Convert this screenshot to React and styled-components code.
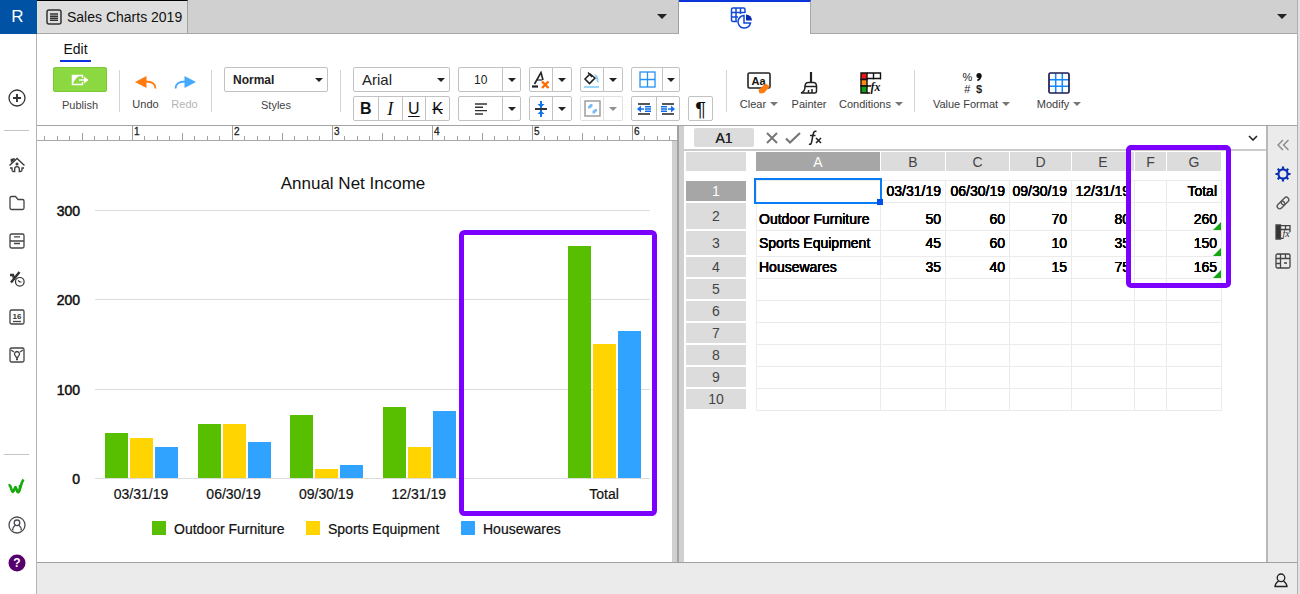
import React from "react";
import styled, { createGlobalStyle } from "styled-components";

const GlobalStyle = createGlobalStyle`
  *, *::before, *::after { box-sizing: border-box; }
  body { margin: 0; background: #fff; color: #111; font: 14px/16px "Liberation Sans", Arial, sans-serif; }
  button, select, input { font: inherit; color: inherit; margin: 0; padding: 0; border: 0; background: none; }
  svg { display: block; flex: none; }
`;

/* ---------- frame ---------- */

const Shell = styled.div`
  display: flex;
  min-height: 100vh;
  border-right: 2px solid #e2e2e2;
`;

const Rail = styled.nav`
  display: flex;
  flex-direction: column;
  flex: none;
  width: 37px;
`;

const Brand = styled.a`
  height: 34px;
  background: #0052a5;
  color: #fff;
  font-size: 17px;
  line-height: 34px;
  text-align: center;
  text-decoration: none;
  padding-right: 2px;
`;

const RailBody = styled.div`
  display: flex;
  flex-direction: column;
  flex: 1;
  padding: 45px 0 12px;
  border-right: 1px solid #b4b4b4;
`;

const RailButton = styled.button`
  display: flex;
  align-items: center;
  justify-content: center;
  height: 38px;
  padding-right: 3px;
`;

const RailRule = styled.hr`
  width: 25px;
  height: 1px;
  margin: ${(p) => (p.$bottom ? "auto 0 13px 4px" : "13px 0 15px 4px")};
  border: 0;
  background: #c4c4c4;
`;

const Main = styled.main`
  display: flex;
  flex-direction: column;
  flex: 1;
  min-width: 0;
  border-right: 1px solid #b0b0b0;
`;

const Panes = styled.div`
  display: grid;
  grid-template-columns: minmax(0, 642fr) minmax(0, 618fr);
  flex: ${(p) => (p.$grow ? 1 : "none")};
`;

/* ---------- tab strip ---------- */

const TabStrip = styled.div`
  display: flex;
  justify-content: space-between;
  height: 34px;
  background: #d0d0d0;
  border-right: ${(p) => (p.$divided ? "1px solid #a0a0a0" : "0")};
`;

const StripFill = styled.div`
  display: flex;
  flex: 1;
  align-items: center;
  justify-content: flex-end;
  padding-right: ${(p) => p.$pad}px;
  border-bottom: 1px solid #a8a8a8;
`;

const DocTab = styled.button`
  display: flex;
  align-items: center;
  gap: 5px;
  width: 151px;
  padding-left: 9px;
  background: #dedede;
  border-top: 1px solid #000;
  border-right: 1px solid #a0a0a0;
  border-bottom: 1px solid #a8a8a8;
  white-space: nowrap;
`;

const ActiveTab = styled.button`
  display: flex;
  align-items: center;
  justify-content: center;
  width: 132px;
  padding-right: 8px;
  background: #fff;
  border-top: 2px solid #0a35d8;
  border-right: 1px solid #a8a8a8;
`;

const MenuButton = styled.button`
  display: flex;
  align-items: center;
`;

/* ---------- toolbar ---------- */

const Toolbar = styled.header`
  padding: 0 16px 4px;
  border-bottom: 1px solid #a4a4a4;
`;

const EditTab = styled.button`
  display: block;
  width: 31px;
  height: 28px;
  margin: 0 0 5px 7px;
  padding-top: 4px;
  border-bottom: 2px solid #0a32e0;
`;

const Tools = styled.div`
  display: flex;
  align-items: flex-start;
  height: 54px;
`;

const Rule = styled.span`
  flex: none;
  width: 1px;
  height: 42px;
  margin: 3px ${(p) => p.$after}px 0 ${(p) => p.$before}px;
  background: #d4d4d4;
`;

const Captioned = styled.label`
  display: flex;
  flex-direction: column;
  align-items: center;
  gap: 5px;
  flex: none;
  color: #444;
  font-size: 11px;
`;

const PublishButton = styled.button`
  display: flex;
  align-items: center;
  justify-content: center;
  width: 54px;
  height: 25px;
  background: #8bd841;
  border: 1px solid #78cb35;
  border-radius: 2px;
`;

const ToolButton = styled.button`
  display: flex;
  flex-direction: column;
  align-items: center;
  gap: 2px;
  flex: none;
  width: ${(p) => p.$w}px;
  padding-top: 5px;
  color: ${(p) => (p.$muted ? "#b4b4b4" : "#3c3c3c")};
  font-size: 11px;
  line-height: 16px;
  white-space: nowrap;
`;

const ToolLabel = styled.span`
  display: flex;
  align-items: center;
  gap: 4px;
`;

const ToolSet = styled.div`
  display: flex;
  gap: ${(p) => p.$gap}px;
`;

const FormatGrid = styled.div`
  display: grid;
  grid-template-columns: 97px 63px 43px 43px 49px 25px;
  grid-auto-rows: 25px;
  gap: 4px 8px;
  flex: none;
`;

const boxed = `
  border: 1px solid #c2c2c2;
  border-radius: 2px;
  background: #fff;
`;

const Picker = styled.span`
  ${boxed}
  display: grid;
  width: ${(p) => p.$w}px;
  height: 25px;
  color: #222;

  > * { grid-area: 1 / 1; }

  > select {
    width: 100%;
    padding-left: ${(p) => p.$pad}px;
    appearance: none;
    font-size: ${(p) => p.$size}px;
    font-weight: ${(p) => (p.$bold ? 700 : 400)};
  }
`;

const PickerCaret = styled.span`
  display: flex;
  align-items: center;
  justify-content: center;
  justify-self: end;
  width: ${(p) => (p.$divided ? 18 : 17)}px;
  border-left: ${(p) => (p.$divided ? "1px solid #c2c2c2" : "0")};
  pointer-events: none;
`;

const Segmented = styled.div`
  ${boxed}
  display: grid;
  grid-template-columns: ${(p) => p.$cols};
  opacity: ${(p) => (p.$muted ? 0.5 : 1)};
`;

const Segment = styled.button`
  display: flex;
  align-items: center;
  justify-content: center;
  min-width: 0;
  font-size: ${(p) => p.$size || 16}px;
  line-height: 20px;
  font-weight: ${(p) => (p.$bold ? 700 : 400)};
  font-style: ${(p) => (p.$italic ? "italic" : "normal")};
  font-family: ${(p) => (p.$serif ? '"Liberation Serif", serif' : "inherit")};
  text-decoration: ${(p) => p.$deco || "none"};
  text-underline-offset: 2px;

  & + & { border-left: 1px solid #c2c2c2; }
`;

/* ---------- document pane ---------- */

const DocPane = styled.section`
  display: flex;
  flex-direction: column;
  border-right: 2px solid #a2a2a2;
`;

const RulerStrip = styled.div`
  height: 15px;
  border-bottom: 1px solid #a8a8a8;
  overflow: hidden;
`;

const Page = styled.div`
  flex: 1;
  border-right: 5px solid #d0d0d0;

  > svg { width: 100%; height: auto; }
`;

/* ---------- sheet pane ---------- */

const SheetPane = styled.section`
  display: grid;
  grid-template-columns: minmax(0, 1fr) 31px;
  position: relative;
  border-left: 5px solid #d0d0d0;
`;

const SheetColumn = styled.div`
  min-width: 0;
`;

const FormulaBar = styled.div`
  display: flex;
  align-items: center;
  height: 25px;
  padding: 0 8px 0 10px;
  border-bottom: 2px solid #cbcbcb;
`;

const CellName = styled.input`
  width: 60px;
  height: 19px;
  margin-right: 11px;
  background: #dcdcdc;
  border-radius: 2px;
  color: #222;
  text-align: center;
  text-shadow: 0 0 0 currentColor;
`;

const FormulaButton = styled.button`
  display: flex;
  margin-right: 6px;
`;

const FormulaInput = styled.input`
  flex: 1;
  min-width: 0;
`;

const Grid = styled.table`
  width: 536px;
  margin: 1px 0 0 2px;
  border-collapse: separate;
  border-spacing: 0;
  table-layout: fixed;
`;

const ColHead = styled.th`
  width: ${(p) => p.$w}px;
  height: 28px;
  padding: 0;
  border: 0 solid #fff;
  border-width: 0 ${(p) => (p.$corner ? 10 : 1)}px 9px 0;
  background: ${(p) => (p.$on ? "#a6a6a6" : "#dcdcdc")};
  background-clip: padding-box;
  color: ${(p) => (p.$on ? "#fff" : "#444")};
  font-weight: 400;
`;

const RowHead = styled.th`
  height: ${(p) => p.$h}px;
  padding: 0;
  border: 0 solid #fff;
  border-width: ${(p) => (p.$on ? 1 : 0)}px 10px 2px 0;
  background: ${(p) => (p.$on ? "#a6a6a6" : "#dcdcdc")};
  background-clip: padding-box;
  color: ${(p) => (p.$on ? "#fff" : "#444")};
  font-weight: 400;
`;

const Cell = styled.td`
  position: relative;
  padding: ${(p) => (p.$low ? "4px" : 0)} ${(p) => (p.$label ? 0 : 4)}px ${(p) => (p.$low ? 0 : "2px")} 2px;
  border: 0 solid #ebebeb;
  border-width: ${(p) => (p.$top ? 1 : 0)}px 1px 1px ${(p) => (p.$label ? 1 : 0)}px;
  color: #000;
  text-align: ${(p) => (p.$label ? "left" : "right")};
  text-shadow: 0 0 0 currentColor, 0 0 0 currentColor, 0 0 0 currentColor;
  white-space: nowrap;
`;

const Selection = styled.span`
  position: absolute;
  z-index: 1;
  inset: -3px -2px -2px -3px;
  border: 2px solid #0a7cf5;

  &::after {
    content: "";
    position: absolute;
    right: -3px;
    bottom: -3px;
    width: 6px;
    height: 6px;
    background: #0050f0;
  }
`;

const FormulaFlag = styled.span`
  position: absolute;
  right: 0;
  bottom: 0;
  width: 8px;
  height: 8px;
  background: #0fa80f;
  clip-path: polygon(100% 0, 100% 100%, 0 100%);
`;

const SheetHighlight = styled.div`
  position: absolute;
  z-index: 2;
  left: 442px;
  top: 19px;
  width: 105px;
  height: 143px;
  border: 5px solid #7b00ff;
  border-radius: 5px;
  pointer-events: none;
`;

const SideTools = styled.aside`
  display: flex;
  flex-direction: column;
  align-items: center;
  padding-top: 4px;
  background: #ebebeb;
  border-left: 2px solid #b8b8b8;
`;

const SideButton = styled.button`
  display: flex;
  align-items: center;
  height: 29px;
`;

const StatusBar = styled.footer`
  display: flex;
  align-items: center;
  justify-content: flex-end;
  height: 32px;
  padding: 3px 9px 0 0;
  background: #ebebeb;
  border-top: 1px solid #a0a0a0;
`;

/* ---------- icons ---------- */

const Icon = ({ w = 18, h = w, color = "#444", sw = 1.3, children }) => (
  <svg width={w} height={h} viewBox={`0 0 ${w} ${h}`} fill="none" stroke={color} strokeWidth={sw} aria-hidden="true">
    {children}
  </svg>
);

const Caret = ({ color = "#222", w = 8 }) => (
  <svg width={w} height={w / 2} viewBox="0 0 8 4" aria-hidden="true">
    <path d="M0 0h8L4 4z" fill={color} />
  </svg>
);

const DocIcon = () => (
  <Icon w={16} h={16} color="#333" sw={1.5}>
    <rect x="1" y="1" width="14" height="14" rx="2" />
    <path d="M4 5h8M4 7.3h8M4 9.3h8M4 11.3h8" strokeWidth="1.4" />
  </Icon>
);

const SheetChartIcon = () => (
  <Icon w={22} h={22} color="#1048d8" sw={1.5}>
    <path d="M7 14.5H3A1.5 1.5 0 0 1 1.5 13V2.500A1.500 1.500 0 0 1 3 1h10.500A1.500 1.500 0 0 1 15 2.500V6M1.500 5.500H15M1.500 10H8M6 1v13.500M10.500 1v6" />
    <path d="M14 8.500a6.300 6.300 0 1 0 6.500 7.500H14z" />
    <path d="M16 7.500v6h6a6 6 0 0 0-6-6z" fill="#0a28b0" stroke="none" />
  </Icon>
);

const PlusIcon = () => (
  <Icon w={18} color="#333" sw={1.3}>
    <circle cx="9" cy="9" r="8" />
    <path d="M9 5v8M5 9h8" strokeWidth="1.900" />
  </Icon>
);

const HomeIcon = () => (
  <Icon w={16} color="#3a3a3a">
    <path d="M.5 8.500L8 1.500l7.500 7" />
    <path d="M3 10.500V13a1.500 1.500 0 0 0 1.500 1.500h1.200V12a2.300 2.300 0 0 1 4.600 0v2.500h1.200A1.500 1.500 0 0 0 13 13v-2.500M1 11h2.500M15 11h-2.500" />
    <circle cx="8" cy="7" r="1.500" fill="#3a3a3a" stroke="none" />
    <path d="M1.500 2l4-1 .5 1.500-4 3.500z" fill="#3a3a3a" stroke="none" />
  </Icon>
);

const FolderIcon = () => (
  <Icon w={16}>
    <path d="M1 3a1.500 1.500 0 0 1 1.500-1.500h4L9 4.500h4.500A1.500 1.500 0 0 1 15 6v7a1.500 1.500 0 0 1-1.500 1.500h-11A1.500 1.500 0 0 1 1 13z" />
  </Icon>
);

const DrawerIcon = () => (
  <Icon w={16}>
    <rect x="1" y="1" width="14" height="14" rx="1.500" />
    <path d="M1 8h14M5 3.800h6M5 10.500h6" />
  </Icon>
);

const RecentIcon = () => (
  <Icon w={16} color="#333">
    <path d="M1 4h3l1.500 5M10.500 1L2 11.500" strokeWidth="2.400" />
    <circle cx="10.800" cy="10.800" r="4.300" strokeWidth="1.200" />
    <path d="M9 9.500l1.800 1.500h1.700" strokeWidth="1.200" />
  </Icon>
);

const CalendarIcon = () => (
  <Icon w={16}>
    <rect x="1" y="1" width="14" height="14" rx="1.500" />
    <path d="M4 12.500h8" />
    <text x="8" y="10" fontSize="8" fontWeight="700" textAnchor="middle" fill="#333" stroke="none">16</text>
  </Icon>
);

const IdeaIcon = () => (
  <Icon w={16}>
    <rect x="1" y="1" width="14" height="14" rx="1.500" />
    <path d="M2 3l3 2M14 3l-3 2M7 12.500h2" />
    <path d="M8 4.500a2.600 2.600 0 0 1 1.300 4.800L8 11.500 6.700 9.300A2.600 2.600 0 0 1 8 4.500z" />
  </Icon>
);

const BrandMark = () => (
  <Icon w={18} color="#18a80c" sw={2.6}>
    <path d="M.5 7c1.500 0 2 1 2.500 3 .5 2 1 4 2 4s1.500-5 2.500-5 1 5 2.500 5c2 0 2-5 2-7" />
    <path d="M9.500 14.500C13 13 12 6 15.500 1.500" />
  </Icon>
);

const AccountIcon = () => (
  <Icon w={18} color="#4a4a52">
    <circle cx="9" cy="9" r="8" />
    <circle cx="9" cy="6.800" r="2.800" />
    <path d="M4.500 14c0-3 1.500-3.500 3-4.800M13.500 14c0-3-1.500-3.500-3-4.800M4.500 13.800h1M12.500 13.800h1" />
  </Icon>
);

const HelpIcon = () => (
  <Icon w={18}>
    <circle cx="9" cy="9" r="8.500" fill="#56006e" stroke="none" />
    <text x="9" y="13" fontSize="12" fontWeight="700" textAnchor="middle" fill="#fff" stroke="none">?</text>
  </Icon>
);

const PublishIcon = () => (
  <Icon w={18} h={12} color="#fff" sw={1.5}>
    <path d="M11.500 4V1.500H1.500v9h10V8" />
    <path d="M2 2h6L5 4.500 2 9z" fill="#fff" stroke="none" />
    <path d="M8 6h7" />
    <path d="M13 2.500L17.500 6 13 9.500z" fill="#fff" stroke="none" />
  </Icon>
);

const UndoIcon = ({ color = "#ff7a0f", flip }) => (
  <Icon w={22} h={22}>
    <g transform={flip ? "translate(22 0) scale(-1 1)" : undefined} stroke="none">
      <path d="M0 10L11.500 4v12z" fill={color} />
      <path d="M11 9.500c6 0 9.500 2.500 9.500 7" stroke={color} strokeWidth="1.800" fill="none" />
    </g>
  </Icon>
);

const AlignIcon = () => (
  <Icon w={14} h={12} color="#333" sw={1.4}>
    <path d="M1 1h12M1 4.300h8M1 7.600h12M1 11h8" />
  </Icon>
);

const ClearFontIcon = () => (
  <Icon w={18} h={18} color="#222" sw={1.6}>
    <path d="M2.500 13L9 1.500 11 9" />
    <path d="M5 9h5" strokeWidth="1.200" />
    <path d="M0 15.500h6" strokeWidth="2.200" />
    <path d="M10 10.500l6.500 6.500M16.500 10.500L10 17" stroke="#ff6a00" strokeWidth="2.400" />
  </Icon>
);

const FillIcon = () => (
  <Icon w={18} h={18} color="#222" sw={1.6}>
    <path d="M2 8l5-5 5 4-5.500 5.500z" />
    <path d="M5 1.500L9 6" strokeWidth="1.300" />
    <path d="M11 3c4 1 5 4 4.500 9-2.500-1-2-6-4.500-9z" fill="#8fd0f6" stroke="none" />
    <path d="M1 16h15" stroke="#8fd3fb" strokeWidth="1.800" />
  </Icon>
);

const BordersIcon = () => (
  <Icon w={17} h={17} color="#2492f0" sw={1.3}>
    <rect x="1" y="1" width="15" height="15" />
    <path d="M8.500 1v15M1 8.500h15" />
  </Icon>
);

const MiddleIcon = () => (
  <Icon w={14} h={16} color="#1174ea" sw={2}>
    <path d="M7 0v16" />
    <path d="M3.500 3h7L7 6.500zM3.500 13h7L7 9.500z" fill="#1174ea" stroke="none" />
    <path d="M1 8h12" stroke="#333" />
  </Icon>
);

const ExpandIcon = () => (
  <Icon w={17} h={17} color="#333" sw={1.4}>
    <rect x="1" y="1" width="15" height="15" />
    <path d="M4 8.500V6.500L6.500 4h2v2.500L6 8.500zM13 9v2l-2.500 2.500h-2V11L11 9z" fill="#0078f0" stroke="none" />
  </Icon>
);

const IndentIcon = ({ flip }) => (
  <Icon w={14} h={12} color="#1070f0" sw={1.5}>
    <path d="M1 1h12M1 11h12" stroke="#222" />
    <g transform={flip ? "translate(14 0) scale(-1 1)" : undefined}>
      <path d="M8 3.700h6M8 6h6M8 8.300h6" strokeWidth="1.400" />
      <path d="M3 6h4" />
      <path d="M0 6l4-3.500v7z" fill="#1070f0" stroke="none" />
    </g>
  </Icon>
);

const ClearIcon = () => (
  <Icon w={24} h={22} color="#222" sw={1.6}>
    <rect x="1" y="1" width="22" height="15" rx="1.500" />
    <text x="11.500" y="12.500" fontSize="11" fontWeight="700" textAnchor="middle" fill="#111" stroke="none">Aa</text>
    <path d="M11.500 18l7-6.500 4.500 3-6 6.500-4.500.5z" fill="#ff7d10" stroke="none" />
  </Icon>
);

const PainterIcon = () => (
  <Icon w={18} h={22} color="#222" sw={1.5}>
    <path d="M11 0v10.500" strokeWidth="2.200" />
    <path d="M5 14.500c0-2.500 1-4 3.500-4h5c2.500 0 3 1.500 3 4z" />
    <path d="M5 14.500c0 3.500-1 5.500-4 6.500h13.500c1.500 0 2-.5 2-2v-4.500M8.500 21v-3M12 21v-4" />
  </Icon>
);

const ConditionsIcon = () => (
  <Icon w={22} h={22} color="#111" sw={1.4}>
    <path d="M1 1h6v6.500H1z" fill="#f01414" />
    <path d="M1 7.500h6v6.500H1z" fill="#ff8a10" />
    <path d="M1 14h6v7H1z" fill="#12a012" />
    <path d="M7 1h13.500v6.500M7 6.500h13.500M13.500 1v6.500M7 14h4M7 21h3" />
    <text x="15.500" y="18.500" fontSize="12" fontStyle="italic" fontWeight="700" textAnchor="middle" fill="#111" stroke="none" fontFamily="Liberation Serif">fx</text>
  </Icon>
);

const ValueIcon = () => (
  <Icon w={22} h={22}>
    <g fill="#222" stroke="none" fontSize="11" textAnchor="middle">
      <text x="6.500" y="9">%</text>
      <text x="6" y="21" fontStyle="italic">#</text>
      <text x="18" y="21" fontWeight="700">$</text>
    </g>
    <circle cx="18" cy="3.500" r="2.600" fill="#111" stroke="none" />
    <path d="M19.700 3.500c0 2.500-1 4-3.300 5" stroke="#111" strokeWidth="1.700" />
  </Icon>
);

const ModifyIcon = () => (
  <Icon w={22} h={22} color="#1088ff" sw={1.5}>
    <path d="M7.700 1v20M14.300 1v20M1 7.700h20M1 14.300h20" />
    <rect x="1" y="1" width="20" height="20" rx="1.500" stroke="#1e1e50" strokeWidth="1.700" />
  </Icon>
);

const CancelIcon = () => (
  <Icon w={14} h={14} color="#777" sw={2}>
    <path d="M2 2l10 10M12 2L2 12" />
  </Icon>
);

const AcceptIcon = () => (
  <Icon w={16} h={14} color="#777" sw={2.2}>
    <path d="M1 7.500l4 4L15 2" />
  </Icon>
);

const FxIcon = () => (
  <Icon w={20} h={20} color="#222" sw={1.5}>
    <path d="M9.500 3.500C7 2.500 6.500 4.500 6 7l-1.500 7.500C4 16.500 3 16.500 2 16M3 7.500h5.500" />
    <path d="M9 10l5 5M14 10l-5 5" />
  </Icon>
);

const ChevronIcon = () => (
  <Icon w={10} h={6} color="#222" sw={1.6}>
    <path d="M1 1l4 4 4-4" />
  </Icon>
);

const CollapseIcon = () => (
  <Icon w={14} h={12} color="#888" sw={1.4}>
    <path d="M7 1L2 6l5 5M12.500 1l-5 5 5 5" />
  </Icon>
);

const GearIcon = () => (
  <Icon w={16} color="#0a30b4" sw={2.2}>
    <circle cx="8" cy="8" r="4.600" />
    <path d="M8 .5v3M8 12.500v3M.5 8h3M12.500 8h3M2.700 2.700l2 2M11.300 11.300l2 2M13.300 2.700l-2 2M4.700 11.300l-2 2" />
  </Icon>
);

const LinkIcon = () => (
  <Icon w={14} color="#555" sw={1.4}>
    <rect x="4.700" y="2.500" width="8.600" height="5" rx="2.500" transform="rotate(-45 9 5)" />
    <rect x=".7" y="6.500" width="8.600" height="5" rx="2.500" transform="rotate(-45 5 9)" />
  </Icon>
);

const SheetFxIcon = () => (
  <Icon w={16} color="#444">
    <path d="M1 1h4.500v14H1z" fill="#333" />
    <path d="M6 1.700h9V8M6 5.500h9M10.500 1.700v4M6 14.300h2" />
    <text x="11" y="13" fontSize="10" fontStyle="italic" textAnchor="middle" fill="#333" stroke="none" fontFamily="Liberation Serif">fx</text>
  </Icon>
);

const SheetGridIcon = () => (
  <Icon w={16} color="#444">
    <rect x="1" y="1" width="14" height="14" rx="1.500" />
    <path d="M1 5.500h14M1 10.500h4M5.500 1v14M10.500 1v4.500M9 10h3" />
  </Icon>
);

const UserIcon = () => (
  <Icon w={14} h={15} color="#222" sw={1.3}>
    <circle cx="7" cy="4.800" r="3.800" />
    <path d="M4.500 8C2.500 9.500 1 10.500 1 13.500h12c0-3-1.500-4-3.500-5.500" />
  </Icon>
);

/* ---------- data ---------- */

const SERIES = [
  { name: "Outdoor Furniture", color: "#58bf00", values: [50, 60, 70, 80, null, 260], legendX: 115 },
  { name: "Sports Equipment", color: "#ffd400", values: [45, 60, 10, 35, null, 150], legendX: 269 },
  { name: "Housewares", color: "#30a2ff", values: [35, 40, 15, 75, null, 165], legendX: 424 },
];
const PERIODS = ["03/31/19", "06/30/19", "09/30/19", "12/31/19", "", "Total"];
const COLUMNS = [["A", 125], ["B", 65], ["C", 64], ["D", 62], ["E", 63], ["F", 32], ["G", 55]];
const ROW_HEIGHTS = [23, 28, 26, 22, 22, 22, 22, 22, 22, 22];
const ROWS = [["", ...PERIODS], ...SERIES.map((s) => [s.name, ...s.values])];

const ZERO_Y = 337;
const yFor = (v) => ZERO_Y - v * 0.893;

function Ruler() {
  const ticks = Array.from({ length: 53 }, (_, i) => i + 1);
  return (
    <svg width="700" height="14" aria-hidden="true">
      {ticks.map((i) => {
        const len = i % 8 === 0 ? 14 : i % 4 === 0 ? 7 : 4;
        return <rect key={i} x={Math.floor(-5 + i * 12.5)} y={14 - len} width="1" height={len} fill="#a0a0a0" />;
      })}
      {[1, 2, 3, 4, 5, 6].map((n) => (
        <text key={n} x={n * 100 - 3} y="9" fontSize="10" fill="#222" stroke="#222" strokeWidth=".3">{n}</text>
      ))}
    </svg>
  );
}

function Chart() {
  return (
    <svg viewBox="0 0 635 421" role="img" aria-label="Annual Net Income" fontSize="14" fill="#111">
      <text x="316" y="48" fontSize="17" textAnchor="middle">Annual Net Income</text>
      {[0, 100, 200, 300].map((v) => (
        <g key={v}>
          <rect x="58" y={Math.round(yFor(v))} width="555" height="1" fill="#dcdcdc" />
          <text x="43" y={Math.round(yFor(v)) + 6} textAnchor="end" stroke="#111" strokeWidth=".5">{v}</text>
        </g>
      ))}
      {PERIODS.map((p, i) => (
        <g key={i}>
          {SERIES.map((s, j) =>
            s.values[i] ? (
              <rect key={s.name} x={Math.round(68 + i * 92.6) + j * 25} y={Math.round(yFor(s.values[i]))} width="23" height={ZERO_Y - Math.round(yFor(s.values[i]))} fill={s.color} />
            ) : null
          )}
          <text x={104 + i * 92.6} y="358" textAnchor="middle" stroke="#111" strokeWidth=".2">{p}</text>
        </g>
      ))}
      {SERIES.map((s) => (
        <g key={s.name}>
          <rect x={s.legendX} y="380" width="14" height="14" fill={s.color} />
          <text x={s.legendX + 22} y="393" stroke="#111" strokeWidth=".2">{s.name}</text>
        </g>
      ))}
      <rect x="424.500" y="91.500" width="193" height="281" rx="3" fill="none" stroke="#7b00ff" strokeWidth="5" />
    </svg>
  );
}

function Sheet() {
  return (
    <Grid>
      <thead>
        <tr>
          <ColHead as="td" $w={70} $corner />
          {COLUMNS.map(([name, w]) => (
            <ColHead key={name} $w={w} $on={name === "A"} scope="col">{name}</ColHead>
          ))}
        </tr>
      </thead>
      <tbody>
        {ROW_HEIGHTS.map((h, r) => (
          <tr key={r}>
            <RowHead $h={h} $on={r === 0} scope="row">{r + 1}</RowHead>
            {COLUMNS.map(([name], c) => (
              <Cell key={name} $label={c === 0} $top={r === 0} $low={r === 1}>
                {ROWS[r]?.[c]}
                {r === 0 && c === 0 && <Selection />}
                {c === 6 && r > 0 && r < 4 && <FormulaFlag />}
              </Cell>
            ))}
          </tr>
        ))}
      </tbody>
    </Grid>
  );
}

function SelectBox({ label, w, pad, size, bold, divided, value }) {
  return (
    <Picker $w={w} $pad={pad} $size={size} $bold={bold}>
      <select aria-label={label} defaultValue={value}>
        <option>{value}</option>
      </select>
      <PickerCaret $divided={divided}><Caret /></PickerCaret>
    </Picker>
  );
}

function SplitButton({ label, cols = "1fr 19px", muted, children }) {
  return (
    <Segmented $cols={cols} $muted={muted}>
      <Segment aria-label={label} disabled={muted}>{children}</Segment>
      <Segment aria-label={`${label} options`} disabled={muted}><Caret /></Segment>
    </Segmented>
  );
}

function Tool({ w, icon, label, menu, muted }) {
  return (
    <ToolButton $w={w} $muted={muted}>
      {icon}
      <ToolLabel>{label}{menu && <Caret color="#777" />}</ToolLabel>
    </ToolButton>
  );
}

const RAIL = [["Home", HomeIcon], ["Files", FolderIcon], ["Filing", DrawerIcon], ["Tasks", RecentIcon], ["Calendar", CalendarIcon], ["Ideas", IdeaIcon]];
const SIDE = [["Collapse", CollapseIcon], ["Settings", GearIcon], ["Links", LinkIcon], ["Formulas", SheetFxIcon], ["Cells", SheetGridIcon]];

export default function App() {
  return (
    <Shell>
      <GlobalStyle />
      <Rail>
        <Brand href="#">R</Brand>
        <RailBody>
          <RailButton aria-label="Create"><PlusIcon /></RailButton>
          <RailRule />
          {RAIL.map(([name, Glyph]) => (
            <RailButton key={name} aria-label={name}><Glyph /></RailButton>
          ))}
          <RailRule $bottom />
          <RailButton aria-label="Workspace"><BrandMark /></RailButton>
          <RailButton aria-label="Account"><AccountIcon /></RailButton>
          <RailButton aria-label="Help"><HelpIcon /></RailButton>
        </RailBody>
      </Rail>

      <Main>
        <Panes>
          <TabStrip $divided>
            <DocTab><DocIcon />Sales Charts 2019</DocTab>
            <StripFill $pad={11}><MenuButton aria-label="Document tabs"><Caret w={10} /></MenuButton></StripFill>
          </TabStrip>
          <TabStrip>
            <ActiveTab aria-label="Sheet"><SheetChartIcon /></ActiveTab>
            <StripFill $pad={10}><MenuButton aria-label="Sheet tabs"><Caret w={10} /></MenuButton></StripFill>
          </TabStrip>
        </Panes>

        <Toolbar>
          <EditTab>Edit</EditTab>
          <Tools>
            <Captioned>
              <PublishButton aria-label="Publish"><PublishIcon /></PublishButton>
              Publish
            </Captioned>
            <Rule $before={12} $after={6} />
            <Tool w={39} icon={<UndoIcon />} label="Undo" />
            <Tool w={39} icon={<UndoIcon color="#45a8ff" flip />} label="Redo" muted />
            <Rule $before={7} $after={12} />
            <Captioned>
              <SelectBox label="Styles" w={104} pad={8} size={12} bold value="Normal" />
              Styles
            </Captioned>
            <Rule $before={12} $after={12} />
            <FormatGrid>
              <SelectBox label="Font" w={97} pad={8} size={15} value="Arial" />
              <SelectBox label="Font size" w={63} pad={15} size={12} divided value="10" />
              <SplitButton label="Clear font"><ClearFontIcon /></SplitButton>
              <SplitButton label="Fill"><FillIcon /></SplitButton>
              <SplitButton label="Borders" cols="1fr 17px"><BordersIcon /></SplitButton>
              <span />
              <Segmented $cols="repeat(4, 1fr)">
                <Segment $bold>B</Segment>
                <Segment $italic $serif $size={18}>I</Segment>
                <Segment $deco="underline">U</Segment>
                <Segment $deco="line-through">K</Segment>
              </Segmented>
              <SplitButton label="Align" cols="1fr 18px"><AlignIcon /></SplitButton>
              <SplitButton label="Vertical align"><MiddleIcon /></SplitButton>
              <SplitButton label="Merge" muted><ExpandIcon /></SplitButton>
              <Segmented $cols="1fr 1fr">
                <Segment aria-label="Outdent"><IndentIcon /></Segment>
                <Segment aria-label="Indent"><IndentIcon flip /></Segment>
              </Segmented>
              <Segmented $cols="1fr">
                <Segment $size={20}>¶</Segment>
              </Segmented>
            </FormatGrid>
            <Rule $before={13} $after={13} />
            <ToolSet $gap={14}>
              <Tool w={38} icon={<ClearIcon />} label="Clear" menu />
              <Tool w={34} icon={<PainterIcon />} label="Painter" />
              <Tool w={62} icon={<ConditionsIcon />} label="Conditions" menu />
            </ToolSet>
            <Rule $before={12} $after={19} />
            <ToolSet $gap={28}>
              <Tool w={75} icon={<ValueIcon />} label="Value Format" menu />
              <Tool w={44} icon={<ModifyIcon />} label="Modify" menu />
            </ToolSet>
          </Tools>
        </Toolbar>

        <Panes $grow>
          <DocPane>
            <RulerStrip><Ruler /></RulerStrip>
            <Page><Chart /></Page>
          </DocPane>
          <SheetPane>
            <SheetColumn>
              <FormulaBar>
                <CellName aria-label="Cell name" defaultValue="A1" />
                <FormulaButton aria-label="Cancel"><CancelIcon /></FormulaButton>
                <FormulaButton aria-label="Accept"><AcceptIcon /></FormulaButton>
                <FormulaButton aria-label="Functions"><FxIcon /></FormulaButton>
                <FormulaInput aria-label="Formula" />
                <MenuButton aria-label="Expand formula bar"><ChevronIcon /></MenuButton>
              </FormulaBar>
              <Sheet />
            </SheetColumn>
            <SideTools>
              {SIDE.map(([name, Glyph]) => (
                <SideButton key={name} aria-label={name}><Glyph /></SideButton>
              ))}
            </SideTools>
            <SheetHighlight />
          </SheetPane>
        </Panes>

        <StatusBar><UserIcon /></StatusBar>
      </Main>
    </Shell>
  );
}
